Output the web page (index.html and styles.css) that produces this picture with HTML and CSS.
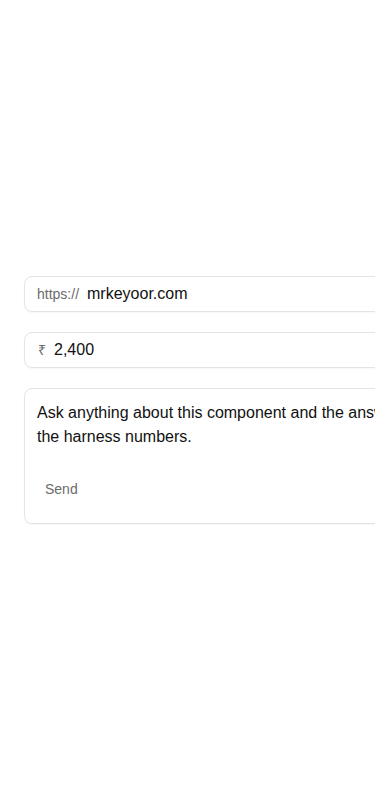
FILE: index.html
```html
<!DOCTYPE html>
<html lang="en">
<head>
<meta charset="utf-8">
<title>Harness</title>
<link rel="stylesheet" href="styles.css">
</head>
<body>
<main class="stack">
  <div class="field">
    <span class="prefix">https://</span>
    <span class="value">mrkeyoor.com</span>
  </div>
  <div class="field">
    <span class="prefix currency">₹</span>
    <span class="value">2,400</span>
  </div>
  <div class="chat">
    <div class="prompt">Ask anything about this component and the answers will draw on<br>the harness numbers.</div>
    <div class="actions">
      <button class="send" type="button">Send</button>
    </div>
  </div>
</main>
</body>
</html>
```
FILE: styles.css
```css
html, body {
  margin: 0;
  padding: 0;
  overflow: hidden;
  background: #ffffff;
}
body {
  font-family: "Liberation Sans", Arial, sans-serif;
  color: #111111;
  min-height: 100vh;
  display: flex;
  align-items: center;
  padding: 0 24px;
  box-sizing: border-box;
}
.stack {
  display: flex;
  flex-direction: column;
  gap: 20px;
  width: 640px;
  flex-shrink: 0;
}
.field {
  display: flex;
  align-items: center;
  gap: 8px;
  border: 1px solid #e4e4e4;
  border-radius: 8px;
  padding: 5px 12px;
  box-shadow: 0 1px 2px rgba(0, 0, 0, 0.04);
}
.prefix {
  font-size: 14px;
  color: #6b6b6b;
  line-height: 24px;
}
.currency {
  font-size: 14px;
  margin-left: 1px;
}
.value {
  font-size: 16px;
  line-height: 24px;
  color: #111111;
}
.chat {
  border: 1px solid #e4e4e4;
  border-radius: 8px;
  padding: 12px 12px 16px;
  box-shadow: 0 1px 2px rgba(0, 0, 0, 0.04);
}
.prompt {
  font-size: 16px;
  line-height: 24px;
  color: #111111;
  white-space: nowrap;
}
.actions {
  display: flex;
  margin-top: 22px;
}
.send {
  font-family: "Liberation Sans", Arial, sans-serif;
  font-size: 14px;
  line-height: 20px;
  color: #6b6b6b;
  background: transparent;
  border: none;
  padding: 8px;
  cursor: pointer;
}
```
